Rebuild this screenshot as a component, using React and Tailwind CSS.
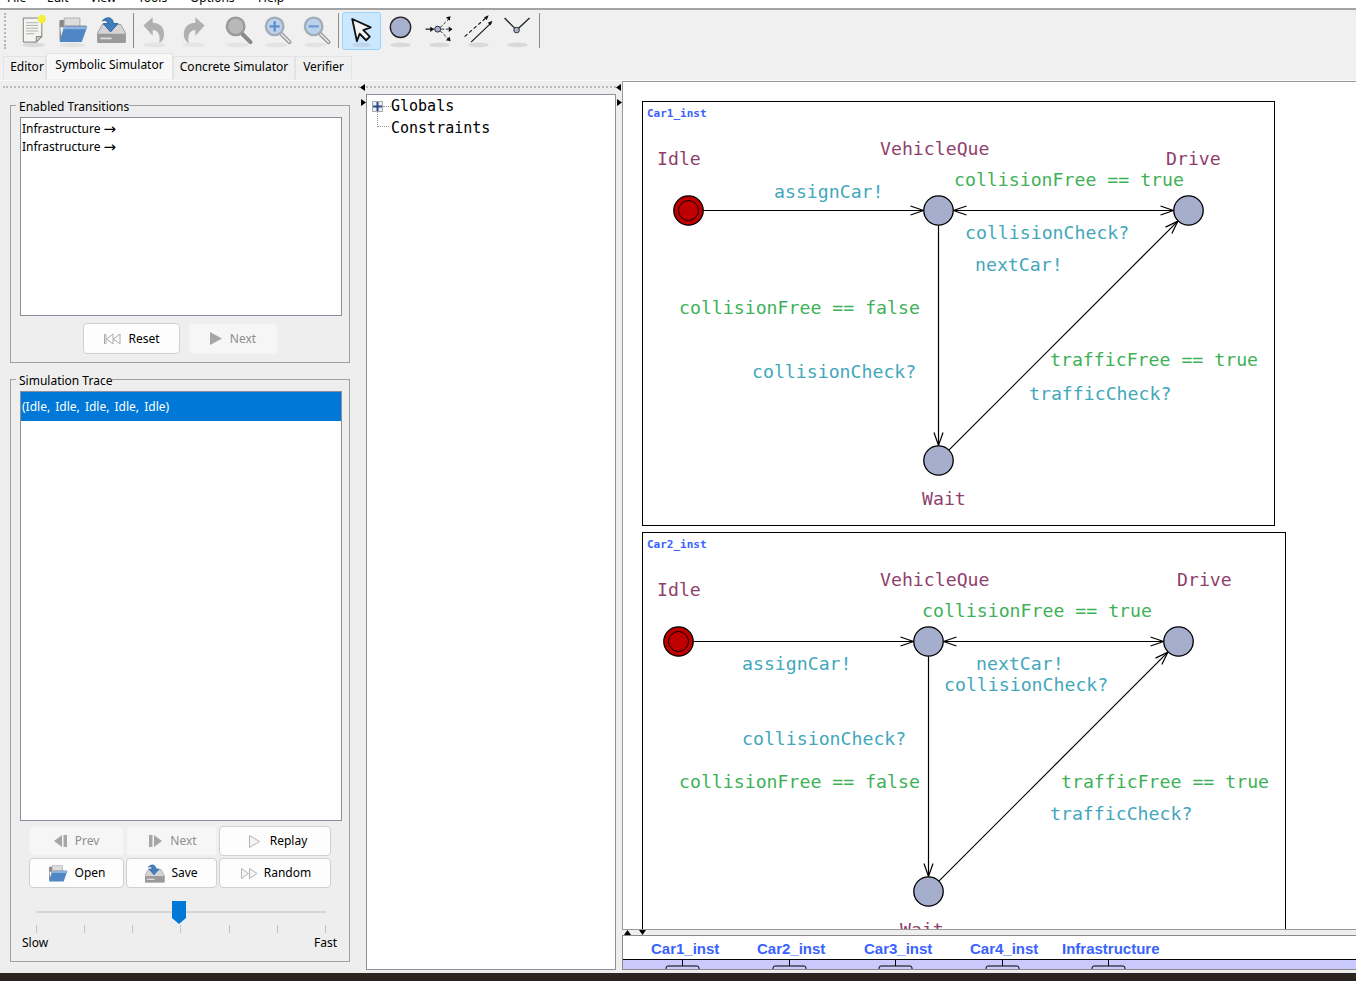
import React from 'react';

const UI = "font-['Noto_Sans',sans-serif]";

// shadow blob under the toolbar icons
function Shadow({ cx = 20, w = 12, o = 0.22 }) {
  return <ellipse cx={cx} cy="34" rx={w} ry="2.5" fill="#888" opacity={o} />;
}

const icons = {
  doc: (
    <>
      <Shadow />
      <path d="M9 5h20v20l-6 6H9z" fill="#f4f4f0" stroke="#777" />
      <path d="M23 31v-6h6z" fill="#ccc" stroke="#777" />
      <path d="M12 10h13M12 13h13M12 16h13M12 19h13M12 22h9" stroke="#aaa" />
      <circle cx="29" cy="6" r="4.5" fill="#f5ee3a" />
    </>
  ),
  folder: (
    <>
      <Shadow w={14} o={0.12} />
      <path d="M6 7h8l2 2h12v6H6z" fill="#888" />
      <path d="M11 5h17v12H11z" fill="#ddd" stroke="#aaa" />
      <path d="M6 9v20h24l5-16H12l-4 12z" fill="#888" />
      <path d="M11 14h25l-6 17H6z" fill="#4f86c6" />
      <path d="M11 14h25l-1 3H10z" fill="#8db4e0" />
    </>
  ),
  save: (
    <>
      <path d="M5 21l5-9h20l5 9v10H5z" fill="#d4d4d4" stroke="#999" />
      <path d="M5 22h30v10H5z" fill="#9a9a9a" />
      <path d="M8 27h12" stroke="#ddd" strokeWidth="2" />
      <path d="M10 8c6-6 12-3 12 3h5l-8 9-8-9h5c0-3-3-4-6-3z" fill="#3f7fc0" stroke="#2d5f99" />
    </>
  ),
  undo: (
    <>
      <Shadow o={0.1} />
      <path d="M8 13l10-9v6c9 0 14 7 12 16-1 3-3 5-5 6 2-8-1-14-7-14v6z" fill="#b0b0b0" />
    </>
  ),
  redo: (
    <>
      <Shadow o={0.1} />
      <path d="M32 13L22 4v6c-9 0-14 7-12 16 1 3 3 5 5 6-2-8 1-14 7-14v6z" fill="#b0b0b0" />
    </>
  ),
  mag: (
    <>
      <Shadow o={0.12} />
      <path d="M25 22l9 9" stroke="#8a8a8a" strokeWidth="4.5" strokeLinecap="round" />
      <circle cx="18" cy="14" r="9.5" fill="#b8b8b8" stroke="#999" strokeWidth="2.5" />
    </>
  ),
  zoomIn: (
    <>
      <Shadow o={0.12} />
      <path d="M25 22l9 9" stroke="#999" strokeWidth="4.5" strokeLinecap="round" />
      <path d="M25 22l9 9" stroke="#eee" strokeWidth="1.5" strokeLinecap="round" />
      <circle cx="18" cy="14" r="9.5" fill="#bcd2ea" stroke="#a3adb9" strokeWidth="2.5" />
      <path d="M12.5 14h11M18 8.5v11" stroke="#5b8fcb" strokeWidth="2.5" />
    </>
  ),
  zoomOut: (
    <>
      <Shadow o={0.12} />
      <path d="M25 22l9 9" stroke="#999" strokeWidth="4.5" strokeLinecap="round" />
      <path d="M25 22l9 9" stroke="#eee" strokeWidth="1.5" strokeLinecap="round" />
      <circle cx="18" cy="14" r="9.5" fill="#bcd2ea" stroke="#a3adb9" strokeWidth="2.5" />
      <path d="M12.5 14h11" stroke="#6f9bd0" strokeWidth="2.5" />
    </>
  ),
  select: (
    <>
      <Shadow w={10} o={0.2} />
      <path d="M10 6l20 9-8 3 7 7-4 4-7-7-3 8z" fill="#f4f4f4" stroke="#111" strokeWidth="2" strokeLinejoin="round" />
    </>
  ),
  location: (
    <>
      <Shadow w={11} />
      <circle cx="20" cy="15" r="11" fill="#a8b0cf" stroke="#222" strokeWidth="1.5" />
    </>
  ),
  branch: (
    <>
      <Shadow w={11} />
      <path d="M5 17h9" stroke="#111" strokeWidth="1.3" />
      <path d="M10 14l4 3-4 3z" fill="#111" />
      <circle cx="18" cy="17" r="3.2" fill="#a8b0cf" stroke="#222" />
      <path d="M21 15l10-10M22 17h11M21 19l10 10" stroke="#111" strokeDasharray="3 2" />
      <path d="M27 4l5-1-1 5zM30 14l4 3-4 3zM31 25l1 5-5-1z" fill="#111" />
    </>
  ),
  edge: (
    <>
      <Shadow w={11} />
      <path d="M5 25L29 4" stroke="#111" strokeWidth="1.2" strokeDasharray="4 2.5" />
      <path d="M12 31L34 10" stroke="#111" strokeWidth="1.2" />
      <path d="M26 4l5-2-2 5zM30 10l5-2-2 5z" fill="#111" />
    </>
  ),
  nail: (
    <>
      <Shadow w={11} />
      <path d="M6 5l12 12M20 17L33 5" stroke="#222" strokeWidth="1.4" />
      <circle cx="19" cy="18" r="3" fill="#a8b0cf" stroke="#222" />
    </>
  ),
};

function ToolIcon({ name, active }) {
  return (
    <div
      className={`flex h-[38px] w-[39px] shrink-0 items-center justify-center rounded-[3px] border ${
        active ? 'border-[#99d1ff] bg-[#cce8ff]' : 'border-transparent'
      }`}
    >
      <svg width="40" height="38" viewBox="0 0 40 38">
        {icons[name]}
      </svg>
    </div>
  );
}

const Sep = ({ className }) => <div className={`h-[35px] w-[1px] shrink-0 bg-[#8c8c8c] ${className}`} />;

function Toolbar() {
  return (
    <div className="flex h-[43px] shrink-0 items-center border-t-[2px] border-[#a3a3a3] bg-[#f0f0f0]">
      <div className="ml-[4px] mr-[8px] h-[36px] w-[2px] border-l-[2px] border-dotted border-[#b5b5b5]" />
      <ToolIcon name="doc" />
      <ToolIcon name="folder" />
      <ToolIcon name="save" />
      <Sep className="ml-[2px] mr-[1px]" />
      <ToolIcon name="undo" />
      <ToolIcon name="redo" />
      <div className="w-[5px] shrink-0" />
      <ToolIcon name="mag" />
      <ToolIcon name="zoomIn" />
      <ToolIcon name="zoomOut" />
      <Sep className="ml-[3px] mr-[3px]" />
      <ToolIcon name="select" active />
      <ToolIcon name="location" />
      <ToolIcon name="branch" />
      <ToolIcon name="edge" />
      <ToolIcon name="nail" />
      <Sep className="ml-[2px]" />
    </div>
  );
}

function Tabs() {
  const tab = 'flex items-center justify-center border border-b-0 border-[#e3e3e3]';
  return (
    <div className="flex h-[29px] shrink-0 items-end bg-[#f0f0f0] pl-[3px] text-[12px] text-black">
      <div className={`${tab} h-[24px] w-[43px] bg-[#f0f0f0] pb-[3px] pl-[5px]`}>Editor</div>
      <div className={`${tab} mb-[1px] h-[26px] w-[127px] bg-[#f8f8f8] pb-[3px]`}>Symbolic Simulator</div>
      <div className={`${tab} h-[24px] w-[122px] bg-[#f0f0f0] pb-[3px]`}>Concrete Simulator</div>
      <div className={`${tab} h-[24px] w-[57px] bg-[#f0f0f0] pb-[3px]`}>Verifier</div>
    </div>
  );
}

function Group({ title, className, children }) {
  return (
    <div className={`relative border border-[#a0a0a0] ${className}`}>
      <span className="absolute left-[5px] top-[-8px] bg-[#eeeeee] pl-[3px] text-[12px] leading-[18px] text-black">
        {title}
      </span>
      {children}
    </div>
  );
}

function Btn({ disabled, className = '', children }) {
  return (
    <div
      className={`flex items-center justify-center gap-[6px] rounded-[4px] border text-[12px] ${
        disabled
          ? 'border-[#f0f0f0] bg-[#f6f6f6] text-[#8f8f8f]'
          : 'border-[#d0d0d0] bg-[#fdfdfd] text-black'
      } ${className}`}
    >
      {children}
    </div>
  );
}

const Mini = {
  rewind: (
    <svg width="19" height="12" viewBox="0 0 19 12" fill="none" stroke="#aaa">
      <path d="M1.5 1v10M3 1v10M10 1L3.5 6l6.5 5zM17 1l-6.5 5 6.5 5z" />
    </svg>
  ),
  play: (
    <svg width="12" height="13" viewBox="0 0 12 13">
      <path d="M0 0l12 6.5L0 13z" fill="#a6a6a6" />
    </svg>
  ),
  prev: (
    <svg width="13" height="12" viewBox="0 0 13 12" fill="#a6a6a6">
      <path d="M0 6l8-6v12zM9.5 0H13v12H9.5z" />
    </svg>
  ),
  next: (
    <svg width="13" height="12" viewBox="0 0 13 12" fill="#a6a6a6">
      <path d="M13 6L5 0v12zM0 0h3.5v12H0z" />
    </svg>
  ),
  replay: (
    <svg width="11" height="13" viewBox="0 0 11 13" fill="#f4f4f4" stroke="#b5b5b5">
      <path d="M.5.5l10 6-10 6z" />
    </svg>
  ),
  random: (
    <svg width="17" height="11" viewBox="0 0 17 11" fill="#f4f4f4" stroke="#b5b5b5">
      <path d="M.5.5l7 5-7 5zM8.5.5l7.5 5-7.5 5z" />
    </svg>
  ),
  open: (
    <svg width="21" height="17" viewBox="6 4 31 28">
      {icons.folder}
    </svg>
  ),
  save: (
    <svg width="20" height="21" viewBox="5 4 31 28">
      {icons.save}
    </svg>
  ),
};

function Transition() {
  return (
    <div className="flex items-center">
      <span>Infrastructure</span>
      <span className="ml-[3px] font-['DejaVu_Sans',sans-serif] text-[15px] leading-[18px]">→</span>
    </div>
  );
}

function LeftPane() {
  return (
    <div className="flex w-[360px] shrink-0 flex-col bg-[#eeeeee]">
      <div className="ml-[3px] mt-[5px] border-t-[2px] border-dotted border-[#b9b9b9]" />
      <div className="flex flex-col px-[10px]">
        <Group title="Enabled Transitions" className="mt-[17px] h-[258px] shrink-0 pl-[9px] pr-[7px] pt-[11px]">
          <div className="h-[199px] border border-[#8a8f9c] bg-white pl-[1px] pt-[2px] text-[12px] leading-[18px] text-black">
            <Transition />
            <Transition />
          </div>
          <div className="mt-[7px] flex justify-start gap-[8px] pl-[63px]">
            <Btn className="h-[31px] w-[97px]">
              {Mini.rewind}
              <span>Reset</span>
            </Btn>
            <Btn disabled className="h-[31px] w-[90px]">
              {Mini.play}
              <span className="ml-[2px]">Next</span>
            </Btn>
          </div>
        </Group>
        <Group title="Simulation Trace" className="mt-[16px] h-[583px] shrink-0 pl-[9px] pr-[7px] pt-[11px]">
          <div className="h-[430px] border border-[#8a8f9c] bg-white text-[12px]">
            <div className="flex h-[29px] items-center bg-[#0078d7] pl-[1px] text-white [word-spacing:2px]">
              (Idle, Idle, Idle, Idle, Idle)
            </div>
          </div>
          <div className="ml-[9px] mt-[5px] grid grid-cols-[95px_91px_112px] grid-rows-[30px_30px] gap-[2px]">
            <Btn disabled>
              {Mini.prev}
              <span className="ml-[2px]">Prev</span>
            </Btn>
            <Btn disabled className="pl-[3px]">
              {Mini.next}
              <span className="ml-[2px]">Next</span>
            </Btn>
            <Btn className="pl-[6px]">
              {Mini.replay}
              <span className="ml-[4px]">Replay</span>
            </Btn>
            <Btn>
              {Mini.open}
              <span>Open</span>
            </Btn>
            <Btn>
              {Mini.save}
              <span>Save</span>
            </Btn>
            <Btn className="pl-[2px]">
              {Mini.random}
              <span>Random</span>
            </Btn>
          </div>
          <div className="relative ml-[16px] mt-[23px] h-[2px] w-[290px] rounded-full bg-[#d6d6d6]">
            <svg className="absolute left-[136px] top-[-10px]" width="14" height="23" viewBox="0 0 14 23">
              <path d="M0 0h14v17l-7 6-7-6z" fill="#0078d7" />
            </svg>
          </div>
          <div className="ml-[16px] mt-[12px] flex h-[8px] w-[290px] justify-between">
            {[0, 1, 2, 3, 4, 5, 6].map((i) => (
              <div key={i} className="h-[8px] w-[1px] bg-[#c4c4c4]" />
            ))}
          </div>
          <div className="mt-[1px] flex w-[320px] justify-between pl-[2px] pr-[3px] text-[12px] leading-[18px] text-black">
            <span>Slow</span>
            <span>Fast</span>
          </div>
        </Group>
      </div>
    </div>
  );
}

function SplitArrows({ className = 'w-[6px]' }) {
  return (
    <div className={`flex shrink-0 flex-col items-center gap-[8px] bg-[#eeeeee] pt-[3px] ${className}`}>
      <svg width="5" height="7" viewBox="0 0 5 7" className="mr-[1px]">
        <path d="M5 0v7L0 3.5z" fill="#000" />
      </svg>
      <svg width="5" height="7" viewBox="0 0 5 7" className="ml-[1px]">
        <path d="M0 0v7l5-3.5z" fill="#000" />
      </svg>
    </div>
  );
}

function TreePane() {
  return (
    <div className="flex w-[250px] shrink-0 flex-col">
      <div className="h-[13px] shrink-0 bg-[#eeeeee]">
        <div className="mt-[5px] border-t-[2px] border-dotted border-[#b9b9b9]" />
      </div>
      <div className="h-[876px] border border-[#8a8f9c] bg-white pl-[5px] font-['DejaVu_Sans_Mono',monospace] text-[15px] leading-[22px] text-black">
        <div className="flex items-center">
          <div className="flex h-[11px] w-[11px] items-center justify-center border border-[#aaa] bg-[#e8eef6]">
            <svg width="9" height="9" viewBox="0 0 9 9">
              <path d="M0 4.5h9M4.5 0v9" stroke="#2c4a86" strokeWidth="2" />
            </svg>
          </div>
          <div className="w-[8px] border-t border-dotted border-[#999]" />
          <span>Globals</span>
        </div>
        <div className="relative flex items-center pl-[19px]">
          <div className="absolute left-[5px] top-[-6px] h-[16px] w-[12px] border-b border-l border-dotted border-[#999]" />
          <span>Constraints</span>
        </div>
      </div>
    </div>
  );
}

const MAROON = '#903f6d';
const TEAL = '#42a7ba';
const GREEN = '#3eb157';

function Loc({ x, y, init }) {
  return init ? (
    <>
      <circle cx={x} cy={y} r="14.7" fill="#c00000" stroke="#000" strokeWidth="1.3" />
      <circle cx={x} cy={y} r="10" fill="#c00000" stroke="#000" strokeWidth="1" />
    </>
  ) : (
    <circle cx={x} cy={y} r="14.7" fill="#a5aecc" stroke="#000" strokeWidth="1.3" />
  );
}

// open arrow head at (x, y), pointing in direction (dx, dy)
function Head({ x, y, dx, dy }) {
  const len = 13;
  const w = 4.5;
  const bx = x - dx * len;
  const by = y - dy * len;
  const p = `${bx - dy * w},${by + dx * w} ${x},${y} ${bx + dy * w},${by - dx * w}`;
  return <polyline points={p} fill="none" stroke="#000" strokeWidth="1.2" />;
}

function Label({ x, y, c, children }) {
  return (
    <text x={x} y={y} fill={c} fontSize="18.2" fontFamily="'DejaVu Sans Mono', monospace">
      {children}
    </text>
  );
}

function Template({ box, name, nameY, locs, labels }) {
  const [bx, by, bw, bh] = box;
  const [a, b, c, d] = locs;
  const s = Math.SQRT1_2;
  return (
    <div className="shrink-0 border border-black bg-white" style={{ width: bw, height: bh }}>
      <svg width={bw - 2} height={bh - 2} viewBox={`${bx + 1} ${by + 1} ${bw - 2} ${bh - 2}`} className="block">
        <text x="647" y={nameY} fill="#3a62ff" fontSize="11" fontWeight="bold" fontFamily="'DejaVu Sans Mono', monospace">
          {name}
        </text>
        <g stroke="#000" strokeWidth="1.2" fill="none">
          <path d={`M${a[0] + 15} ${a[1]}H${b[0] - 15}`} />
          <path d={`M${b[0] + 15} ${b[1]}H${c[0] - 15}`} />
          <path d={`M${b[0]} ${b[1] + 15}V${d[1] - 15}`} />
          <path d={`M${d[0] + 10.6} ${d[1] - 10.6}L${c[0] - 10.6} ${c[1] + 10.6}`} />
        </g>
        <Head x={b[0] - 15} y={b[1]} dx={1} dy={0} />
        <Head x={b[0] + 15} y={b[1]} dx={-1} dy={0} />
        <Head x={c[0] - 15} y={c[1]} dx={1} dy={0} />
        <Head x={d[0]} y={d[1] - 15} dx={0} dy={1} />
        <Head x={c[0] - 10.6} y={c[1] + 10.6} dx={s} dy={-s} />
        <Loc x={a[0]} y={a[1]} init />
        <Loc x={b[0]} y={b[1]} />
        <Loc x={c[0]} y={c[1]} />
        <Loc x={d[0]} y={d[1]} />
        {labels.map(([x, y, col, t]) => (
          <Label key={`${x}-${y}`} x={x} y={y} c={col}>
            {t}
          </Label>
        ))}
      </svg>
    </div>
  );
}

const car1Labels = [
  [657, 165, MAROON, 'Idle'],
  [880, 155, MAROON, 'VehicleQue'],
  [1166, 165, MAROON, 'Drive'],
  [922, 505, MAROON, 'Wait'],
  [954, 186, GREEN, 'collisionFree == true'],
  [774, 198, TEAL, 'assignCar!'],
  [965, 239, TEAL, 'collisionCheck?'],
  [975, 271, TEAL, 'nextCar!'],
  [679, 314, GREEN, 'collisionFree == false'],
  [752, 378, TEAL, 'collisionCheck?'],
  [1050, 366, GREEN, 'trafficFree == true'],
  [1029, 400, TEAL, 'trafficCheck?'],
];

const car2Labels = [
  [657, 596, MAROON, 'Idle'],
  [880, 586, MAROON, 'VehicleQue'],
  [1177, 586, MAROON, 'Drive'],
  [900, 936, MAROON, 'Wait'],
  [922, 617, GREEN, 'collisionFree == true'],
  [742, 670, TEAL, 'assignCar!'],
  [976, 670, TEAL, 'nextCar!'],
  [944, 691, TEAL, 'collisionCheck?'],
  [742, 745, TEAL, 'collisionCheck?'],
  [679, 788, GREEN, 'collisionFree == false'],
  [1061, 788, GREEN, 'trafficFree == true'],
  [1050, 820, TEAL, 'trafficCheck?'],
];

function ProcessBar() {
  const stubs = [682, 789, 895, 1002, 1108];
  return (
    <div className="h-[35px] shrink-0 border-b border-l border-t border-[#8a8a8a] bg-white">
      <div className="flex h-[23px] items-center pl-[28px] pt-[3px] font-['Liberation_Sans',sans-serif] text-[15px] font-bold text-[#3a62ff]">
        <span className="w-[106px]">Car1_inst</span>
        <span className="w-[107px]">Car2_inst</span>
        <span className="w-[106px]">Car3_inst</span>
        <span className="w-[92px]">Car4_inst</span>
        <span>Infrastructure</span>
      </div>
      <div className="h-[10px] overflow-hidden border-t border-black bg-[#c9c9fb]">
        <svg width="733" height="10" viewBox="623 960 733 10" className="block">
          {stubs.map((c) => (
            <path
              key={c}
              d={`M${c + 0.5} 960v6M${c - 16} 970v-2q0-2 2-2h29q2 0 2 2v2`}
              stroke="#000"
              strokeWidth="1"
              fill="none"
            />
          ))}
        </svg>
      </div>
    </div>
  );
}

function RightPane() {
  return (
    <div className="flex min-w-0 flex-1 flex-col pb-[3px]">
      <div className="flex min-h-0 flex-1 flex-col gap-[6px] overflow-hidden border-l border-t border-[#9a9a9a] bg-white pl-[19px] pt-[19px]">
        <Template
          box={[642, 101, 633, 425]}
          name="Car1_inst"
          nameY={117}
          locs={[[688.5, 210.5], [938.5, 210.5], [1188.5, 210.5], [938.5, 460.5]]}
          labels={car1Labels}
        />
        <Template
          box={[642, 532, 644, 424]}
          name="Car2_inst"
          nameY={548}
          locs={[[678.5, 641.5], [928.5, 641.5], [1178.5, 641.5], [928.5, 891.5]]}
          labels={car2Labels}
        />
      </div>
      <div className="flex h-[6px] shrink-0 items-center gap-[8px] border-t border-[#9a9a9a] bg-[#eeeeee] pl-[2px]">
        <svg width="7" height="5" viewBox="0 0 7 5">
          <path d="M0 5h7L3.5 0z" fill="#000" />
        </svg>
        <svg width="7" height="5" viewBox="0 0 7 5">
          <path d="M0 0h7L3.5 5z" fill="#000" />
        </svg>
      </div>
      <ProcessBar />
    </div>
  );
}

export default function App() {
  return (
    <div className={`flex h-[982px] w-[1356px] flex-col overflow-hidden bg-white ${UI}`}>
      <div className="h-[8px] shrink-0 overflow-hidden bg-white">
        <div className="mt-[-11px] flex h-[18px] text-[12px] leading-[18px] text-black">
          <span className="ml-[7px] w-[40px]">File</span>
          <span className="w-[43px]">Edit</span>
          <span className="w-[48px]">View</span>
          <span className="w-[52px]">Tools</span>
          <span className="w-[68px]">Options</span>
          <span>Help</span>
        </div>
      </div>
      <Toolbar />
      <Tabs />
      <div className="flex h-[893px] shrink-0 border-t border-[#fafafa] bg-[#eeeeee]">
        <div className="flex w-[622px] shrink-0">
          <LeftPane />
          <SplitArrows />
          <TreePane />
          <SplitArrows className="flex-1" />
        </div>
        <RightPane />
      </div>
      <div className="h-[8px] shrink-0 bg-[#2b2420]" />
    </div>
  );
}
